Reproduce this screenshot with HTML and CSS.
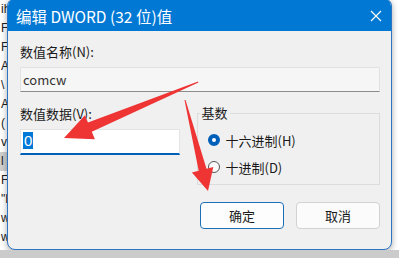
FILE: index.html
```html
<html>
<head>
    <title>编辑 DWORD (32 位)值</title>
    <link rel="stylesheet" href="styles.css">
</head>
<body>
    <div class="desk">
        <div class="desk-row">
            <div class="behind">
                <div class="line">ih</div>
                <div class="line">Fir</div>
                <div class="line">Fir</div>
                <div class="line">A</div>
                <div class="line">\</div>
                <div class="line">A</div>
                <div class="line">(</div>
                <div class="line">v</div>
                <div class="line sel">l</div>
                <div class="line">Fir</div>
                <div class="line">"L</div>
                <div class="line">ws</div>
                <div class="line">ws</div>
            </div>
            <div class="dialog">
                <div class="titlebar">
                    <span class="title">编辑 DWORD (32 位)值</span>
                    <svg class="close" width="12" height="12" viewBox="0 0 12 12">
                        <path d="M1 1 L11 11 M11 1 L1 11" stroke="#fff" stroke-width="1.2" fill="none"/>
                    </svg>
                </div>
                <div class="content">
                    <div class="label">数值名称(N):</div>
                    <div class="field name-field">comcw</div>
                    <div class="split">
                        <div class="left-col">
                            <div class="label">数值数据(V):</div>
                            <div class="field data-field"><span class="selected">0</span></div>
                        </div>
                        <fieldset class="group">
                            <legend>基数</legend>
                            <div class="radio">
                                <span class="dot on"></span>
                                <span>十六进制(H)</span>
                            </div>
                            <div class="radio">
                                <span class="dot"></span>
                                <span>十进制(D)</span>
                            </div>
                        </fieldset>
                    </div>
                    <div class="buttons">
                        <div class="btn default">确定</div>
                        <div class="btn">取消</div>
                    </div>
                </div>
            </div>
            <div class="right-gap"></div>
        </div>
        <div class="desk-bottom"></div>
    </div>

    <svg class="arrows" width="399" height="258" viewBox="0 0 399 258">
        <polygon fill="#ef3434" points="198,81.5 198.4,82.4 91.8,131.8 94.9,139.2 64,138 84.9,115.2 88,122.6"/>
        <polygon fill="#ef3434" points="184.5,100.1 185.5,99.9 206.5,168.7 213.3,167 208,191 191.9,172.4 198.7,170.7"/>
    </svg>
</body>
</html>
```

FILE: styles.css
```css
body {
    margin: 0;
    width: 399px;
    height: 258px;
    overflow: hidden;
    background: #ffffff;
    font-family: "Noto Sans CJK SC", "Liberation Sans", sans-serif;
    position: relative;
}

.desk {
    display: flex;
    flex-direction: column;
    height: 258px;
}

.desk-row {
    display: flex;
    height: 250px;
}

.desk-bottom {
    height: 8px;
    background: #cbcbcb;
}

.behind {
    width: 7px;
    overflow: hidden;
    font-family: "Liberation Sans", sans-serif;
    font-size: 12px;
    color: #222;
}

.behind .line {
    height: 19px;
    line-height: 19px;
    white-space: nowrap;
    padding-left: 1px;
}

.behind .sel {
    background: #cfcfcf;
}

.right-gap {
    flex: 1;
}

.dialog {
    width: 383px;
    height: 250px;
    margin-top: -2px;
    border: 1px solid #2c74c4;
    border-radius: 8px;
    background: #f0f0f0;
    overflow: hidden;
    box-shadow: 0 2px 6px rgba(0, 0, 0, 0.35);
    display: flex;
    flex-direction: column;
}

.titlebar {
    height: 31px;
    background: #0078d4;
    display: flex;
    align-items: center;
    justify-content: space-between;
    padding: 1px 9px 0 8px;
    color: #ffffff;
}

.title {
    font-size: 15.5px;
}

.close {
    display: block;
}

.content {
    padding: 12px 11px 0 12px;
    font-size: 13px;
    color: #1a1a1a;
}

.label {
    height: 18px;
    line-height: 18px;
}

.field {
    padding-left: 2px;
    box-sizing: border-box;
}

.name-field {
    margin-top: 6px;
    height: 25px;
    line-height: 23px;
    background: #f6f6f6;
    border: 1px solid #e2e2e2;
    border-bottom-color: #8c8c8c;
    color: #333;
}

.split {
    display: flex;
    margin-top: 12px;
}

.left-col {
    width: 160px;
    padding-top: 1px;
}

.data-field {
    margin-top: 6px;
    height: 26px;
    background: #ffffff;
    border: 1px solid #e4e4e4;
    border-bottom: 2px solid #005fb8;
    line-height: 22px;
}

.selected {
    background: #0078d7;
    color: #ffffff;
    padding: 0 1px;
    font-family: "Liberation Sans", sans-serif;
    font-size: 15px;
}

.group {
    margin: 0 0 0 17px;
    padding: 8px 0 0 10px;
    width: 184px;
    height: 81px;
    box-sizing: border-box;
    border: 1px solid #dcdcdc;
}

.group legend {
    padding: 0 2px;
    margin-left: -8px;
    height: 18px;
    line-height: 18px;
    font-size: 13px;
}

.radio {
    display: flex;
    align-items: center;
    gap: 6px;
    height: 20px;
    margin-bottom: 7px;
}

.dot {
    width: 12px;
    height: 12px;
    box-sizing: border-box;
    border: 1px solid #555;
    border-radius: 50%;
    background: #fafafa;
}

.dot.on {
    border: 4px solid #005fb8;
    background: #ffffff;
}

.buttons {
    display: flex;
    justify-content: flex-end;
    gap: 12px;
    margin-top: 17px;
}

.btn {
    width: 84px;
    height: 27px;
    box-sizing: border-box;
    border: 1px solid #d2d2d2;
    border-radius: 4px;
    background: #fbfbfb;
    text-align: center;
    line-height: 25px;
    font-size: 13px;
}

.btn.default {
    border-color: #1d6fb8;
    background: #fdfdfd;
}

.arrows {
    position: absolute;
    top: 0;
    left: 0;
    pointer-events: none;
}
```
